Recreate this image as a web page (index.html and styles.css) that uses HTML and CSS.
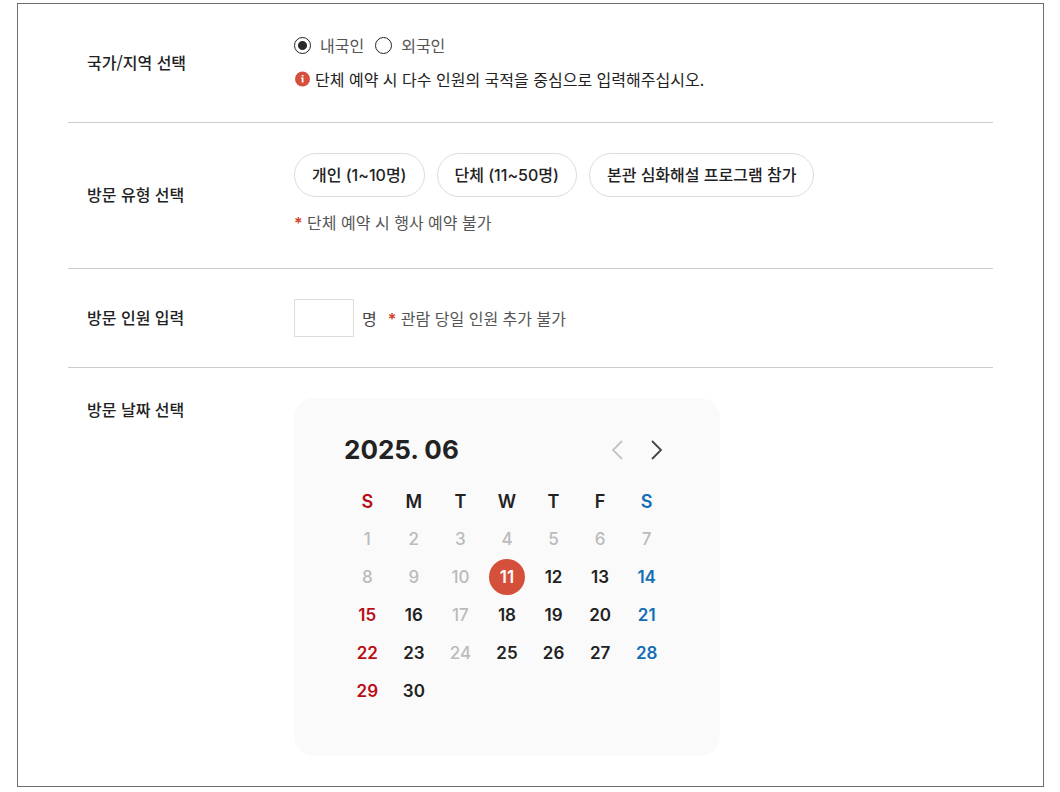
FILE: index.html
```html
<!DOCTYPE html>
<html lang="ko">
<head>
    <meta charset="utf-8">
    <meta name="viewport" content="width=device-width, initial-scale=1">
    <title>관람 예약</title>
    <link rel="stylesheet" href="styles.css">
</head>
<body>
    <form class="reserve" action="#" method="post">
        <div class="row" role="radiogroup" aria-labelledby="t_nation">
            <h3 class="tit" id="t_nation">국가/지역 선택</h3>
            <div class="con">
                <div class="radios">
                    <input type="radio" name="nation" id="nation1" value="1" checked><label for="nation1">내국인</label>
                    <input type="radio" name="nation" id="nation2" value="2"><label for="nation2">외국인</label>
                </div>
                <p class="info">
                    <svg width="17" height="16" viewBox="0 0 17 16" aria-hidden="true">
                        <circle cx="8.5" cy="8" r="7.5" fill="#d4503a" />
                        <path d="M7.7 4h1.8v1.6H7.7zM7 6.6h2.5v4.9H7.7V7.8H7z" fill="#fff" />
                    </svg>
                    단체 예약 시 다수 인원의 국적을 중심으로 입력해주십시오.
                </p>
            </div>
        </div>
        <div class="row" role="group" aria-labelledby="t_type">
            <h3 class="tit" id="t_type">방문 유형 선택</h3>
            <div class="con">
                <div class="types">
                    <button type="button">개인 (1~10명)</button>
                    <button type="button">단체 (11~50명)</button>
                    <button type="button">본관 심화해설 프로그램 참가</button>
                </div>
                <p class="note type_note"><em>*</em> 단체 예약 시 행사 예약 불가</p>
            </div>
        </div>
        <div class="row">
            <h3 class="tit"><label for="cnt">방문 인원 입력</label></h3>
            <div class="con count">
                <input type="text" id="cnt" name="cnt" inputmode="numeric">
                <span>명</span>
                <p class="note"><em>*</em> 관람 당일 인원 추가 불가</p>
            </div>
        </div>
        <div class="row row_date">
            <h3 class="tit">방문 날짜 선택</h3>
            <div class="calendar">
                <div class="cal_top">
                    <h4>2025. 06</h4>
                    <div class="cal_nav">
                        <button type="button" aria-label="이전 달" disabled><svg width="14" height="20" viewBox="0 0 14 20"><path d="M12 1L3 10l9 9" /></svg></button>
                        <button type="button" aria-label="다음 달"><svg width="14" height="20" viewBox="0 0 14 20"><path d="M2 1l9 9-9 9" /></svg></button>
                    </div>
                </div>
                <table>
                    <thead>
                        <tr><th>S</th><th>M</th><th>T</th><th>W</th><th>T</th><th>F</th><th>S</th></tr>
                    </thead>
                    <tbody>
                        <tr>
                            <td><button type="button" disabled>1</button></td>
                            <td><button type="button" disabled>2</button></td>
                            <td><button type="button" disabled>3</button></td>
                            <td><button type="button" disabled>4</button></td>
                            <td><button type="button" disabled>5</button></td>
                            <td><button type="button" disabled>6</button></td>
                            <td><button type="button" disabled>7</button></td>
                        </tr>
                        <tr>
                            <td><button type="button" disabled>8</button></td>
                            <td><button type="button" disabled>9</button></td>
                            <td><button type="button" disabled>10</button></td>
                            <td><button type="button" class="on">11</button></td>
                            <td><button type="button">12</button></td>
                            <td><button type="button">13</button></td>
                            <td><button type="button">14</button></td>
                        </tr>
                        <tr>
                            <td><button type="button">15</button></td>
                            <td><button type="button">16</button></td>
                            <td><button type="button" disabled>17</button></td>
                            <td><button type="button">18</button></td>
                            <td><button type="button">19</button></td>
                            <td><button type="button">20</button></td>
                            <td><button type="button">21</button></td>
                        </tr>
                        <tr>
                            <td><button type="button">22</button></td>
                            <td><button type="button">23</button></td>
                            <td><button type="button" disabled>24</button></td>
                            <td><button type="button">25</button></td>
                            <td><button type="button">26</button></td>
                            <td><button type="button">27</button></td>
                            <td><button type="button">28</button></td>
                        </tr>
                        <tr>
                            <td><button type="button">29</button></td>
                            <td><button type="button">30</button></td>
                            <td></td>
                            <td></td>
                            <td></td>
                            <td></td>
                            <td></td>
                        </tr>
                    </tbody>
                </table>
            </div>
        </div>
    </form>
</body>
</html>
```
FILE: styles.css
```css
* { box-sizing: border-box; margin: 0; padding: 0; }
body { background: #fff; color: #222; font: 16px/24px "Noto Sans CJK KR", sans-serif; }
button, input { font: inherit; color: inherit; }
button { cursor: pointer; }
button:disabled { cursor: default; }

.reserve { margin: 3px 16px 5px 17px; padding: 0 50px; border: 1px solid #6e6e6e; }
.row { display: flex; align-items: center; padding: 30px 0; border-bottom: 1px solid #ccc; }
.row_date { align-items: flex-start; border-bottom: 0; }
.tit { flex: 0 0 226px; padding: 0 0 3px 19px; font-size: 16px; font-weight: 500; line-height: 22px; }
.con { flex: 1; min-width: 0; }

/* 국가/지역 */
.radios { display: flex; align-items: center; color: #555; line-height: 22px; }
.radios input { appearance: none; width: 17px; height: 17px; margin-right: 9px; border: 1px solid #222; border-radius: 50%; background: #fff; }
.radios input:checked { background: radial-gradient(circle, #2a2a2a 4px, #fff 5px); }
.radios label { margin-right: 11px; }
.info { display: flex; align-items: center; gap: 4px; margin: 11px 0 1px; }

/* 방문 유형 */
.types { display: flex; flex-wrap: wrap; gap: 12px; }
.types button { height: 44px; padding: 0 17px; border: 1px solid #ddd; border-radius: 22px; background: #fff; font-family: Inter, "Noto Sans CJK KR", sans-serif; font-weight: 500; }
.note { color: #555; }
.note em { color: #d4402c; font-family: Inter, sans-serif; font-style: normal; font-weight: 600; }
.type_note { margin: 13px 0 3px; }

/* 방문 인원 */
.count { display: flex; align-items: center; color: #444; line-height: 22px; }
.count input { width: 60px; height: 38px; margin-right: 8px; padding: 0 8px; border: 1px solid #ddd; background: #fff; }
.count .note { margin-left: 11px; }

/* 달력 */
.calendar { width: 426px; max-width: 100%; padding: 32px 50px 46px; border-radius: 20px; background: #fafafa; font-family: Inter, sans-serif; }
.cal_top { display: flex; align-items: center; justify-content: space-between; height: 40px; }
.cal_top h4 { font-size: 26px; font-weight: 700; }
.cal_nav { display: flex; gap: 14px; }
.cal_nav button { display: flex; align-items: center; justify-content: center; width: 26px; height: 30px; border: 0; background: none; }
.cal_nav path { fill: none; stroke: #444; stroke-width: 1.8; }
.cal_nav button:disabled path { stroke: #c4c4c4; }
.calendar table { width: 100%; margin-top: 14px; table-layout: fixed; border-collapse: collapse; text-align: center; }
.calendar th { height: 36px; font-size: 18px; font-weight: 600; }
.calendar td { height: 38px; }
.calendar td button { width: 36px; height: 36px; border: 0; border-radius: 50%; background: none; font-size: 17px; font-weight: 600; vertical-align: middle; }
.calendar tr > :first-child { color: #b90e15; }
.calendar tr > :last-child { color: #136eb5; }
.calendar td button:disabled { color: #bbb; font-weight: 500; }
.calendar td .on { background: #d4503a; color: #fff; }
```
